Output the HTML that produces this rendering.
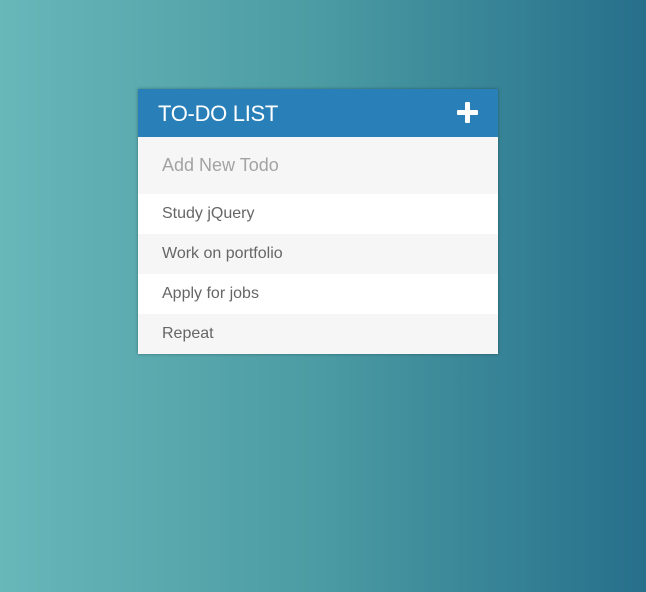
<!DOCTYPE html>
<html><head><style>
html,body{margin:0;width:646px;height:592px;overflow:hidden}
body{background:linear-gradient(to right,#68b7b9,#4a9ba3 50%,#276f8b);font-family:"Liberation Sans",sans-serif;position:relative}
#card{position:absolute;left:138px;top:89px;width:360px;background:#f7f7f7;box-shadow:0 0 3px rgba(0,0,0,.35)}
h1{margin:0;height:48px;background:#2980b9;color:#fff;font-size:22px;font-weight:normal;line-height:49px;padding-left:20px;position:relative;letter-spacing:-0.3px}
.plus{position:absolute;left:319px;top:13px;width:21px;height:21px}
.plus:before,.plus:after{content:"";position:absolute;background:#fff;border-radius:1px}
.plus:before{left:8px;top:0;width:5px;height:21px}
.plus:after{left:0;top:8px;width:21px;height:5px}
.inp{height:57px;line-height:57px;padding-left:24px;font-size:18px;color:#a3a3a3;background:#f6f6f6}
.r{height:40px;line-height:40px;padding-left:24px;font-size:16px;color:#666}
.w{background:#fff}.g{background:#f6f6f6}
</style></head><body>
<div id="card">
<h1>TO-DO LIST<span class="plus"></span></h1>
<div class="inp">Add New Todo</div>
<div class="r w">Study jQuery</div>
<div class="r g">Work on portfolio</div>
<div class="r w">Apply for jobs</div>
<div class="r g">Repeat</div>
</div>
</body></html>
